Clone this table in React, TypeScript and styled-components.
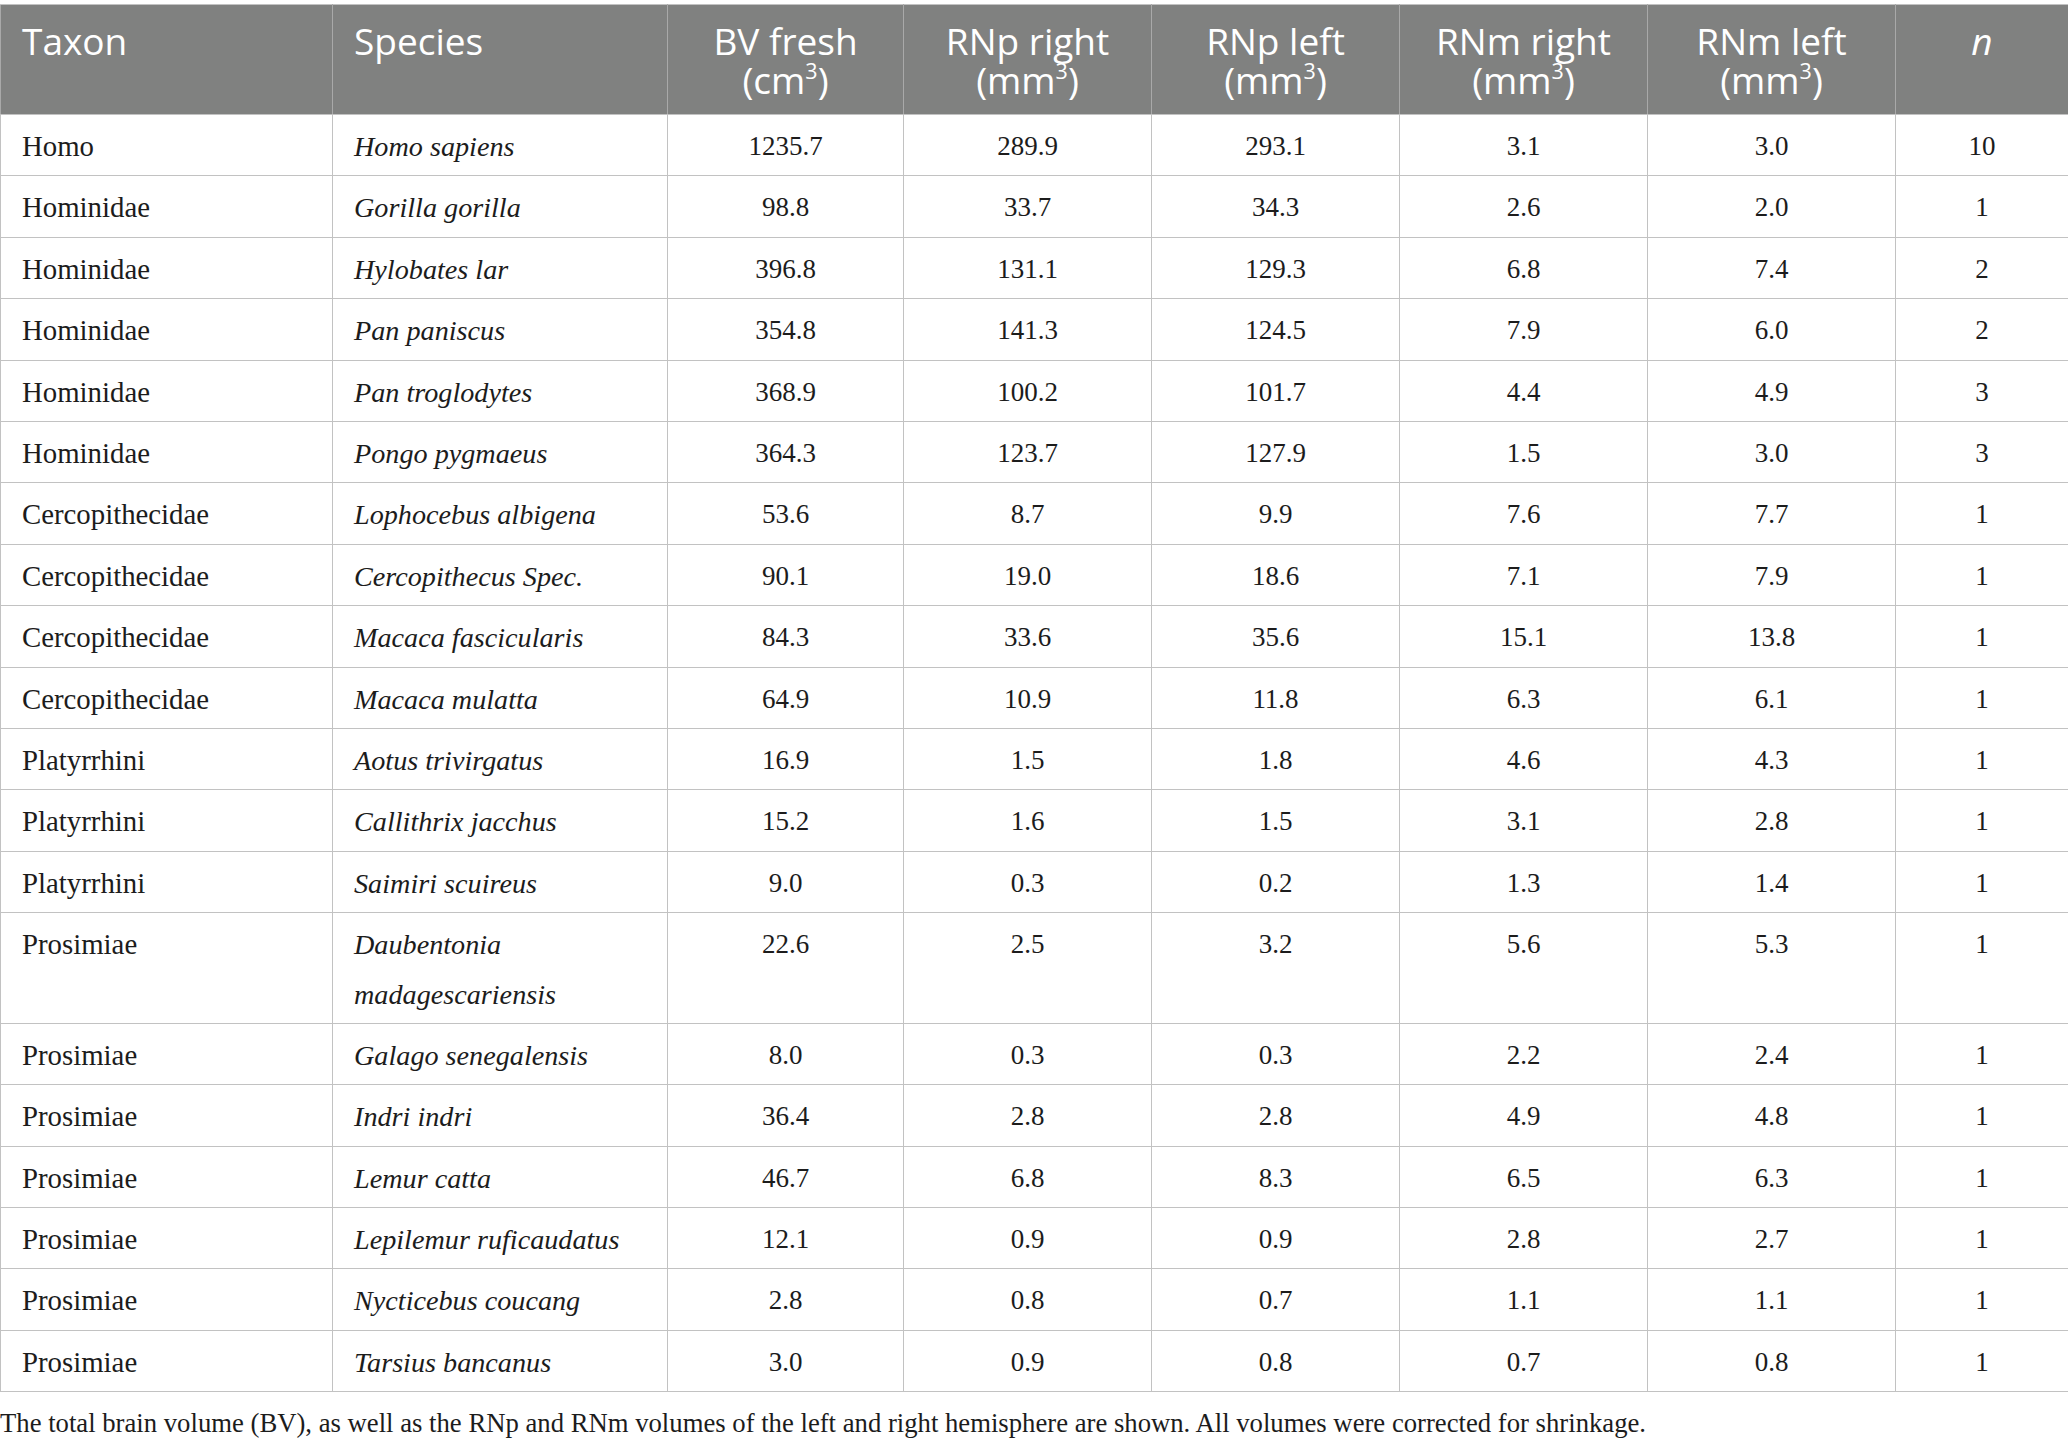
import React from "react";
import styled, { createGlobalStyle } from "styled-components";

const Global = createGlobalStyle`
  html, body { margin: 0; padding: 0; background: #ffffff; }
  body { font-family: "Liberation Serif", "Times New Roman", serif; }
`;

const Page = styled.div`
  width: 2068px;
  padding-top: 4px;
`;

const Table = styled.table`
  width: 2068px;
  table-layout: fixed;
  border-collapse: collapse;
  border: 1px solid #c2c2c2;
`;

const HeadCell = styled.th<{ $align: "left" | "center"; $italic?: boolean }>`
  background: #808180;
  color: #ffffff;
  font-family: "Open Sans", "Noto Sans", sans-serif;
  font-weight: 400;
  font-size: 37px;
  line-height: 38.5px;
  font-style: ${(p) => (p.$italic ? "italic" : "normal")};
  text-align: ${(p) => p.$align};
  vertical-align: top;
  padding: 17px ${(p) => (p.$align === "left" ? "0 15px 21px" : "0 15px 0")};
  border: 1px solid #a9a9a9;
  border-top-color: #c2c2c2;
  border-bottom-color: #c2c2c2;
  height: 77px;
`;

const Sup = styled.span`
  font-size: 0.58em;
  position: relative;
  top: -0.66em;
  line-height: 0;
`;

const Cell = styled.td<{ $align: "left" | "center"; $italic?: boolean; $size: number }>`
  color: #1c1c1c;
  font-family: "Liberation Serif", "Times New Roman", serif;
  font-size: ${(p) => p.$size}px;
  line-height: 49.45px;
  font-style: ${(p) => (p.$italic ? "italic" : "normal")};
  text-align: ${(p) => p.$align};
  vertical-align: top;
  padding: 7px ${(p) => (p.$align === "left" ? "8px 3.95px 21px" : "0 3.95px 0")};
  border: 1px solid #c2c2c2;
`;

const Caption = styled.p`
  margin: 13px 0 0 0;
  font-family: "Liberation Serif", "Times New Roman", serif;
  font-size: 26.7px;
  line-height: 36px;
  color: #1c1c1c;
`;

type Row = [string, string, string, string, string, string, string, string];

const rows: Row[] = [
  ["Homo", "Homo sapiens", "1235.7", "289.9", "293.1", "3.1", "3.0", "10"],
  ["Hominidae", "Gorilla gorilla", "98.8", "33.7", "34.3", "2.6", "2.0", "1"],
  ["Hominidae", "Hylobates lar", "396.8", "131.1", "129.3", "6.8", "7.4", "2"],
  ["Hominidae", "Pan paniscus", "354.8", "141.3", "124.5", "7.9", "6.0", "2"],
  ["Hominidae", "Pan troglodytes", "368.9", "100.2", "101.7", "4.4", "4.9", "3"],
  ["Hominidae", "Pongo pygmaeus", "364.3", "123.7", "127.9", "1.5", "3.0", "3"],
  ["Cercopithecidae", "Lophocebus albigena", "53.6", "8.7", "9.9", "7.6", "7.7", "1"],
  ["Cercopithecidae", "Cercopithecus Spec.", "90.1", "19.0", "18.6", "7.1", "7.9", "1"],
  ["Cercopithecidae", "Macaca fascicularis", "84.3", "33.6", "35.6", "15.1", "13.8", "1"],
  ["Cercopithecidae", "Macaca mulatta", "64.9", "10.9", "11.8", "6.3", "6.1", "1"],
  ["Platyrrhini", "Aotus trivirgatus", "16.9", "1.5", "1.8", "4.6", "4.3", "1"],
  ["Platyrrhini", "Callithrix jacchus", "15.2", "1.6", "1.5", "3.1", "2.8", "1"],
  ["Platyrrhini", "Saimiri scuireus", "9.0", "0.3", "0.2", "1.3", "1.4", "1"],
  ["Prosimiae", "Daubentonia madagescariensis", "22.6", "2.5", "3.2", "5.6", "5.3", "1"],
  ["Prosimiae", "Galago senegalensis", "8.0", "0.3", "0.3", "2.2", "2.4", "1"],
  ["Prosimiae", "Indri indri", "36.4", "2.8", "2.8", "4.9", "4.8", "1"],
  ["Prosimiae", "Lemur catta", "46.7", "6.8", "8.3", "6.5", "6.3", "1"],
  ["Prosimiae", "Lepilemur ruficaudatus", "12.1", "0.9", "0.9", "2.8", "2.7", "1"],
  ["Prosimiae", "Nycticebus coucang", "2.8", "0.8", "0.7", "1.1", "1.1", "1"],
  ["Prosimiae", "Tarsius bancanus", "3.0", "0.9", "0.8", "0.7", "0.8", "1"],
];

const widths = [332, 335, 236, 248, 248, 248, 248, 173];

const units = (name: string, unit: string) => (
  <>
    {name}
    <br />({unit}
    <Sup>3</Sup>)
  </>
);

export default function App() {
  return (
    <Page>
      <Global />
      <Table>
        <colgroup>
          {widths.map((w, i) => (
            <col key={i} style={{ width: w }} />
          ))}
        </colgroup>
        <thead>
          <tr>
            <HeadCell $align="left">Taxon</HeadCell>
            <HeadCell $align="left">Species</HeadCell>
            <HeadCell $align="center">{units("BV fresh", "cm")}</HeadCell>
            <HeadCell $align="center">{units("RNp right", "mm")}</HeadCell>
            <HeadCell $align="center">{units("RNp left", "mm")}</HeadCell>
            <HeadCell $align="center">{units("RNm right", "mm")}</HeadCell>
            <HeadCell $align="center">{units("RNm left", "mm")}</HeadCell>
            <HeadCell $align="center" $italic>
              n
            </HeadCell>
          </tr>
        </thead>
        <tbody>
          {rows.map((r, i) => (
            <tr key={i}>
              <Cell $align="left" $size={28.8}>
                {r[0]}
              </Cell>
              <Cell $align="left" $italic $size={28.2}>
                {r[1]}
              </Cell>
              {r.slice(2).map((v, j) => (
                <Cell key={j} $align="center" $size={27}>
                  {v}
                </Cell>
              ))}
            </tr>
          ))}
        </tbody>
      </Table>
      <Caption>
        The total brain volume (BV), as well as the RNp and RNm volumes of the left and right
        hemisphere are shown. All volumes were corrected for shrinkage.
      </Caption>
    </Page>
  );
}
